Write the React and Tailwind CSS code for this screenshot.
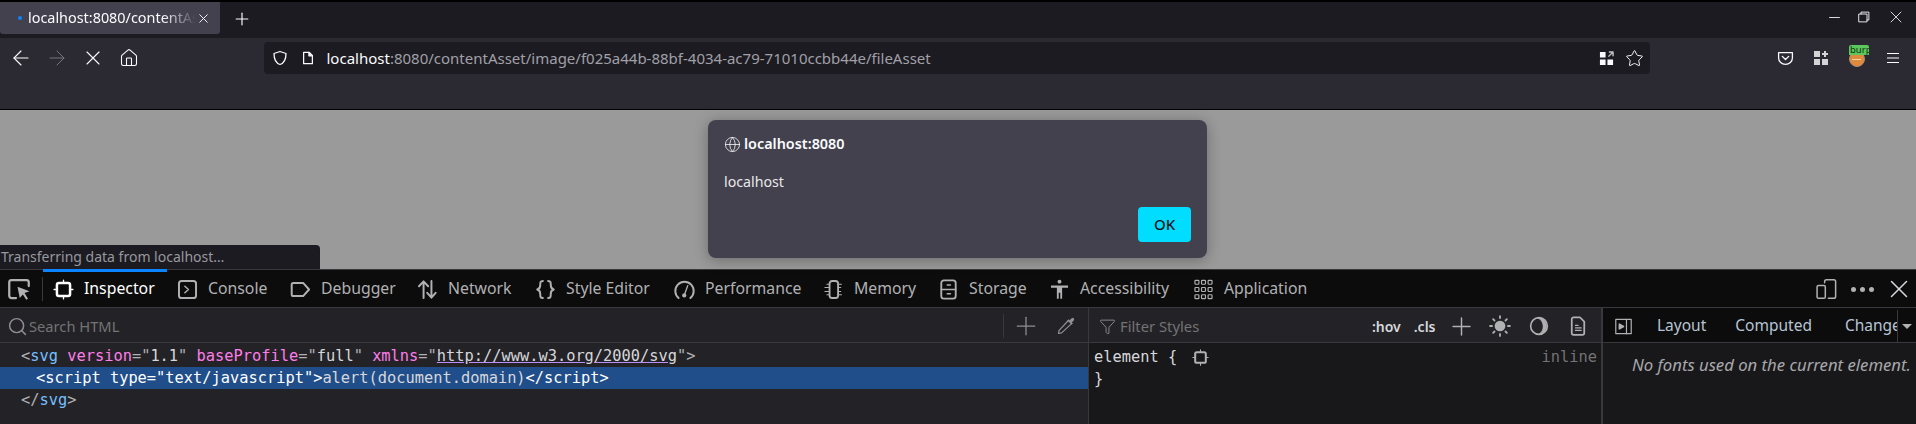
import React from 'react';
import {ArrowLeft, ArrowRight, X, Home, Plus, Star, Globe, Search, Minus, Filter} from 'lucide-react';

const sans = "font-['Noto_Sans',sans-serif]";
const mono = "font-['DejaVu_Sans_Mono',monospace]";

const Svg = ({size = 16, className = '', children}) => (
    <svg width={size} height={size} viewBox="0 0 16 16" fill="none" stroke="currentColor" strokeWidth="1.3"
         strokeLinecap="round" strokeLinejoin="round" className={`shrink-0 ${className}`}>
        {children}
    </svg>
);

const icons = {
    pick: <><path d="M6 14H3a1.5 1.5 0 0 1-1.5-1.5v-9A1.5 1.5 0 0 1 3 2h10a1.5 1.5 0 0 1 1.5 1.5V6" strokeWidth="1.5"/><path d="M7 6.5l8 3-3.3 1.2L14 14.5l-1.2.7-2.2-3.6L8.5 14z" fill="currentColor" stroke="none"/></>,
    inspector: <><rect x="3" y="3" width="10" height="10" rx="1.5" strokeWidth="1.9"/><path d="M8 .8v2M8 13.200v2M.8 8h2M13.200 8h2" strokeWidth="1"/></>,
    console: <><rect x="1.5" y="1.5" width="13" height="13" rx="2" strokeWidth="1.5"/><path d="M6 5.5L8.7 8 6 10.500" strokeWidth="1.100"/></>,
    debugger: <path d="M2.500 3h7.500l4.500 5-4.500 5H2.500A1.200 1.200 0 0 1 1.300 11.800V4.200A1.200 1.200 0 0 1 2.500 3z" strokeWidth="1.500"/>,
    network: <path d="M5 14.500V2M1.500 5.500L5 1.800l3.500 3.700M11 1.500V14M7.800 10.500l3.200 3.700 3.200-3.700" strokeWidth="1.500"/>,
    style: <path d="M6 1.500C4 1.500 4 2.500 4 4.500c0 2-.3 3-2.300 3.500C3.700 8.500 4 9.500 4 11.500c0 2 0 3 2 3M10 1.500c2 0 2 1 2 3 0 2 .3 3 2.300 3.500-2 .5-2.300 1.500-2.300 3.500 0 2 0 3-2 3" strokeWidth="1.500"/>,
    performance: <><path d="M3.500 14.500A7 7 0 1 1 12.500 14.500" strokeWidth="1.500"/><path d="M10.500 5L8.300 11" strokeWidth="1"/><circle cx="7.800" cy="12.500" r="1.600" fill="currentColor" stroke="none"/></>,
    memory: <><rect x="5" y="1.500" width="6.500" height="13" rx="2" strokeWidth="1.400"/><path d="M3 4h2M1.500 6.500H5M1.500 9.500H5M3 12h2M11.500 4H14M11.500 6.500h2M11.500 9.500h2M11.500 12H14" strokeWidth=".9"/></>,
    storage: <><rect x="2.500" y="1" width="11" height="14" rx="2" strokeWidth="1.400"/><path d="M2.500 8h11M7 4.500h2.500M7 11.200h2.500" strokeWidth="1.100"/></>,
    accessibility: <><circle cx="8" cy="2" r="1.500" fill="currentColor" stroke="none"/><path d="M1.500 5h13v1.600H10V15H8.600v-4.500H7.400V15H6V6.600H1.500z" fill="currentColor" stroke="none"/></>,
    application: <><rect x="1.500" y="1" width="3" height="3" rx=".6" strokeWidth=".9"/><rect x="6.500" y="1" width="3" height="3" rx=".6" strokeWidth=".9"/><rect x="11.500" y="1" width="3" height="3" rx=".6" strokeWidth=".9"/><rect x="1.500" y="6.500" width="3" height="3" rx=".6" strokeWidth=".9"/><rect x="6.500" y="6.500" width="3" height="3" rx=".6" strokeWidth=".9"/><rect x="11.500" y="6.500" width="3" height="3" rx=".6" strokeWidth=".9"/><rect x="1.500" y="12" width="3" height="3" rx=".6" strokeWidth=".9"/><rect x="6.500" y="12" width="3" height="3" rx=".6" strokeWidth=".9"/><rect x="11.500" y="12" width="3" height="3" rx=".6" strokeWidth=".9"/></>,
};

const tabs = [
    {name: 'Inspector', icon: 'inspector', width: 'w-[124px]', active: true},
    {name: 'Console', icon: 'console', width: 'w-[113px]'},
    {name: 'Debugger', icon: 'debugger', width: 'w-[127px]'},
    {name: 'Network', icon: 'network', width: 'w-[118px]'},
    {name: 'Style Editor', icon: 'style', width: 'w-[139px]'},
    {name: 'Performance', icon: 'performance', width: 'w-[149px]'},
    {name: 'Memory', icon: 'memory', width: 'w-[115px]'},
    {name: 'Storage', icon: 'storage', width: 'w-[111px]'},
    {name: 'Accessibility', icon: 'accessibility', width: 'w-[144px]'},
    {name: 'Application', icon: 'application', width: 'w-[130px]'},
];

const TabStrip = () => (
    <div className="h-[38px] bg-[#1c1b22] border-t-2 border-black flex items-start">
        <div className="h-[32px] w-[220px] bg-[#42414d] rounded-b-[3px] flex items-center pl-[18px] pr-[9px] text-[14.4px] text-[#fbfbfe] overflow-hidden">
            <span className="w-[4px] h-[4px] rounded-full bg-[#0a84ff] mr-[6px] shrink-0"/>
            <span className="whitespace-nowrap overflow-hidden flex-1 [mask-image:linear-gradient(to_right,black_80%,transparent)]">localhost:8080/contentAsset</span>
            <X size={15} strokeWidth={1.5} className="shrink-0"/>
        </div>
        <Plus size={20} strokeWidth={1.4} className="ml-[12px] mt-[7px] text-[#fbfbfe]"/>
        <div className="ml-auto flex items-center text-[#fbfbfe] mt-[5px]">
            <Minus size={17} strokeWidth={1.2} className="mr-[15px]"/>
            <Svg size={12} className="mr-[16px]">
                <path d="M4 4V1.500h10.500V12H12" strokeWidth="1.200"/><rect x="1.500" y="4" width="10.500" height="10.500" strokeWidth="1.200"/>
            </Svg>
            <X size={20} strokeWidth={1} className="mr-[10px]"/>
        </div>
    </div>
);

const NavBar = () => (
    <div className="h-[72px] bg-[#2b2a33] border-b border-black pt-[4px] text-[#fbfbfe]">
        <div className="flex items-center h-[32px]">
            <ArrowLeft size={24} strokeWidth={1.1} className="ml-[9px]"/>
            <ArrowRight size={24} strokeWidth={1} className="ml-[12px] text-[#75747c]"/>
            <X size={24} strokeWidth={1.1} className="ml-[12px]"/>
            <Home size={20} strokeWidth={1.3} className="ml-[13.5px]"/>
            <div className="ml-[125.5px] w-[1386px] h-[32px] bg-[#1c1b22] rounded-[4px] flex items-center pl-[7.5px] pr-[6.5px]">
                <Svg size={16}><path d="M8 1.500l6 2c0 5.500-1.500 9.500-6 11-4.500-1.500-6-5.500-6-11z"/></Svg>
                <Svg size={14} className="ml-[13.5px]"><path d="M3 1.500h6.500l3.500 3.500v9.500H3z" strokeWidth="1.400"/><path d="M9 1.500V5.500h4" fill="currentColor"/></Svg>
                <div className="ml-[11.5px] text-[15px] whitespace-nowrap">
                    localhost<span className="text-[#a0a0a6]">:8080/contentAsset/image/f025a44b-88bf-4034-ac79-71010ccbb44e/fileAsset</span>
                </div>
                <Svg size={15} className="ml-auto">
                    <path d="M1 1h6v6H1zM1 9h6v6H1zM9 9h6v6H9z" fill="currentColor" stroke="none"/><path d="M10 6l4.500-4.500M10.500 1H15v4.500" stroke="#c0c0c4" strokeWidth="1.500" strokeLinecap="butt"/>
                </Svg>
                <Star size={19} strokeWidth={1.2} className="ml-[11px]"/>
            </div>
            <Svg size={17} className="ml-[126.5px]">
                <path d="M1.500 2.500h13v5a6.500 6 0 0 1-13 0z" strokeWidth="1.200"/><path d="M5 6l3 3 3-3" strokeWidth="1.300"/>
            </Svg>
            <Svg size={16} className="ml-[19.5px] text-[#d4d4d6]">
                <path d="M1 1h6v6H1zM1 9h6v6H1zM9 9h6v6H9zM11 1h2v2h2v2h-2v2h-2V5H9V3h2z" fill="currentColor" stroke="none"/>
            </Svg>
            <div className="ml-[18px] w-[20px] h-[20px] relative shrink-0">
                <div className="absolute left-[2px] top-[3px] w-[16px] h-[16px] rounded-full bg-[#e08a3c] border border-[#a98a74]"/>
                <div className="absolute left-[5px] top-[11px] w-[9px] h-[1px] bg-[#f5d6b0]"/>
                <div className="absolute left-[2px] top-[-3px] w-[20px] h-[10px] bg-[#5cc75c] rounded-t-[2px] text-[#123312] text-[9.5px] leading-[10px] overflow-hidden pl-px">burp</div>
            </div>
            <Svg size={16} className="ml-[18px]"><path d="M2 3.500h12M2 8h12M2 12.500h12" strokeWidth="1.200" strokeLinecap="butt"/></Svg>
        </div>
    </div>
);

const Page = () => (
    <div className="relative h-[159px] bg-[#9a9a9a]">
        <div className="absolute left-[708px] top-[10px] w-[499px] h-[138px] bg-[#42414d] rounded-[8px] shadow-[0_2px_14px_rgba(0,0,0,0.3)] text-[#fbfbfe] px-[16px] pt-[14px]">
            <div className="flex items-center h-[20px] text-[14.4px] font-semibold">
                <Globe size={17} strokeWidth={1.1} className="mr-[3px]"/>
                localhost:8080
            </div>
            <div className="mt-[18px] text-[14.2px] leading-[20px] text-[#e8e8ea]">localhost</div>
            <div className="flex justify-end mt-[15px]">
                <button className="w-[53px] h-[35px] rounded-[4px] bg-[#00ddff] text-[#15141a] text-[15px] font-medium">OK</button>
            </div>
        </div>
        <div className="absolute left-0 bottom-0 w-[320px] h-[24px] bg-[#1c1b22] rounded-tr-[4px] text-[#98989d] text-[14px] leading-[24px] pl-px whitespace-nowrap">
            Transferring data from localhost…
        </div>
    </div>
);

const DevtoolsTabs = () => (
    <div className="h-[39px] bg-[#0c0c0d] border-t border-[#38383d] border-b flex items-center text-[#b1b1b3] pt-px">
        <div className="w-[43px] h-[24px] border-r border-[#38383d] flex items-center pl-[7px] shrink-0">
            <Svg size={24}>{icons.pick}</Svg>
        </div>
        {tabs.map((tab) => (
            <div key={tab.name}
                 className={`relative h-full flex items-center pl-[10px] text-[15.8px] shrink-0 ${tab.width} ${tab.active ? 'text-white' : ''}`}>
                {tab.active && <span className="absolute left-0 right-0 top-[-2px] h-[3px] bg-[#0a84ff]"/>}
                <Svg size={21} className="mr-[10px]">{icons[tab.icon]}</Svg>
                {tab.name}
            </div>
        ))}
        <div className="ml-auto flex items-center pr-[2px]">
            <Svg size={22}>
                <path d="M7 3.500V2.500A1.300 1.300 0 0 1 8.300 1.200h5.400A1.300 1.300 0 0 1 15 2.500v11a1.300 1.300 0 0 1-1.300 1.300h-4" strokeWidth="1.100"/><rect x="1.500" y="5.500" width="6" height="9.300" rx="1" strokeWidth="1.100"/>
            </Svg>
            <span className="w-[5px] h-[5px] rounded-full bg-[#b1b1b3] ml-[14px]"/>
            <span className="w-[5px] h-[5px] rounded-full bg-[#b1b1b3] ml-[4px]"/>
            <span className="w-[5px] h-[5px] rounded-full bg-[#b1b1b3] ml-[4px]"/>
            <X size={30} strokeWidth={1.2} className="ml-[10px] text-[#d7d7db]"/>
        </div>
    </div>
);

const MarkupPanel = () => (
    <div className="w-[1089px] shrink-0 bg-[#232327] border-r border-[#38383d]">
        <div className="h-[35px] border-b border-[#38383d] flex items-center pl-[7px] pt-[2px] text-[#737373] text-[14.7px]">
            <Search size={21} strokeWidth={1.7} className="mr-[1px] text-[#8f8f92]"/>
            Search HTML
            <span className="ml-auto w-px h-[24px] bg-[#38383d]"/>
            <Plus size={30} strokeWidth={1} className="ml-[7px] text-[#8f8f92]"/>
            <Svg size={20} className="ml-[14.5px] mr-[12.5px] text-[#8f8f92]">
                <path d="M9.500 4L2.500 11.500 2 14l2.500-.5L12 6.500" strokeWidth="1"/><path d="M9 3.500L12.500 7l1-1-.8-.8 1.500-1.700a1.200 1.200 0 0 0-1.700-1.700L10.800 3.300 10 2.500z" fill="currentColor" stroke="none"/>
            </Svg>
        </div>
        <div className={`${mono} text-[15.35px] leading-[22px] whitespace-nowrap text-[#b1b1b3] pt-[2px]`}>
            <div className="h-[22px] pl-[21px]">
                &lt;<span className="text-[#75bfff]">svg</span> <span className="text-[#ff7de9]">version</span>="<span className="text-[#d7d7db]">1.1</span>" <span className="text-[#ff7de9]">baseProfile</span>="<span className="text-[#d7d7db]">full</span>" <span className="text-[#ff7de9]">xmlns</span>="<span className="text-[#d7d7db] underline decoration-[#b98eff]">http://www.w3.org/2000/svg</span>"&gt;
            </div>
            <div className="h-[22px] pl-[36px] bg-[#204e8a] text-white">
                &lt;script type="text/javascript"&gt;<span className="text-[#d7d7db]">alert(document.domain)</span>&lt;/script&gt;
            </div>
            <div className="h-[22px] pl-[21px]">
                &lt;/<span className="text-[#75bfff]">svg</span>&gt;
            </div>
        </div>
    </div>
);

const StylesPanel = () => (
    <div className="w-[514px] shrink-0 bg-[#18181a] border-r-2 border-[#38383d]">
        <div className="h-[35px] bg-[#232327] border-b border-[#38383d] flex items-center pl-[10px] pt-[2px] text-[#737373] text-[14.8px]">
            <Filter size={17} strokeWidth={1.3} className="mr-[4px] text-[#8f8f92]"/>
            Filter Styles
            <span className="ml-auto text-[#d7d7db] text-[14px] font-semibold">:hov</span>
            <span className="ml-[13px] text-[#d7d7db] text-[14px] font-semibold">.cls</span>
            <Plus size={29} strokeWidth={1.2} className="ml-[11px] text-[#b1b1b3]"/>
            <Svg size={22} className="ml-[13.5px] text-[#b1b1b3]">
                <circle cx="8" cy="8" r="3.900" fill="currentColor" stroke="none"/>
                <path d="M8 .8v1.400M8 13.800v1.400M.8 8h1.400M13.800 8h1.400M3 3l1 1M12 12l1 1M3 13l1-1M12 4l1-1" strokeWidth="1.300"/>
            </Svg>
            <Svg size={20} className="ml-[18px] text-[#b1b1b3]">
                <circle cx="8" cy="8" r="6.700" strokeWidth="1.300"/><path d="M7 1.500a6.500 6.500 0 0 1 1 13 7.500 7.500 0 0 0-1-13z" fill="currentColor" stroke="currentColor" strokeWidth=".5"/>
            </Svg>
            <Svg size={20} className="ml-[19px] mr-[13px] text-[#b1b1b3]">
                <path d="M3 2.500A1.500 1.500 0 0 1 4.500 1h5l3.500 3.500v9A1.500 1.500 0 0 1 11.500 15h-7A1.500 1.500 0 0 1 3 13.500z" strokeWidth="1.400"/><path d="M6 7.500h2M6 9.500h4.500M6 11.500h4.500" strokeWidth="1"/>
            </Svg>
        </div>
        <div className={`${mono} text-[15.35px] leading-[22px] text-[#d7d7db] pl-[5px] pr-[4px] pt-[3px]`}>
            <div className="flex items-center h-[22px]">
                element {'{'}
                <Svg size={17} className="ml-[15px] text-[#b1b1b3]">{icons.inspector}</Svg>
                <span className="ml-auto text-[#737373]">inline</span>
            </div>
            <div>{'}'}</div>
        </div>
    </div>
);

const SidePanel = () => (
    <div className="flex-1 min-w-0 bg-[#18181a]">
        <div className="h-[35px] bg-[#0c0c0d] border-b border-[#38383d] flex items-center pt-[2px] text-[#b8c4d4] text-[15.5px] overflow-hidden">
            <Svg size={19} className="ml-[10.5px] text-[#b1b1b3]">
                <rect x="1.500" y="2" width="13" height="12" strokeWidth="1"/><path d="M10.500 2v12" strokeWidth="1"/><path d="M4.500 6l3.500 2-3.500 2z" fill="currentColor"/>
            </Svg>
            <span className="ml-[24.5px]">Layout</span>
            <span className="ml-[29px]">Computed</span>
            <span className="ml-[33px] w-[52px] overflow-hidden whitespace-nowrap">Changes</span>
            <span className="h-full w-[19px] border-l border-[#38383d] flex items-center justify-center shrink-0">
                <span className="w-0 h-0 border-x-[5px] border-x-transparent border-t-[5px] border-t-[#b1b1b3]"/>
            </span>
        </div>
        <div className="pl-[29px] pt-[9px] italic text-[#a8a8ac] text-[16.7px] whitespace-nowrap">
            No fonts used on the current element.
        </div>
    </div>
);

const App = () => (
    <div className={`w-[1916px] h-[424px] overflow-hidden bg-[#18181a] ${sans}`}>
        <TabStrip/>
        <NavBar/>
        <Page/>
        <DevtoolsTabs/>
        <div className="flex h-[116px]">
            <MarkupPanel/>
            <StylesPanel/>
            <SidePanel/>
        </div>
    </div>
);

export default App;
